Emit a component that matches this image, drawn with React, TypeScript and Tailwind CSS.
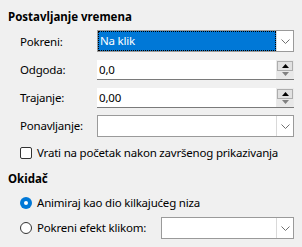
import React from "react";

function Chevron() {
  return (
    <svg width="9" height="5" viewBox="0 0 9 5" className="text-[#707070]">
      <path d="M0.5 0.5 L4.5 4.5 L8.5 0.5" fill="none" stroke="currentColor" strokeWidth="1" />
    </svg>
  );
}

function Combo({ value, focused }: { value?: string; focused?: boolean }) {
  return (
    <div className="flex h-[22px] w-full border border-[#9a9a9a] bg-white">
      {focused ? (
        <div className="flex flex-1 items-center border border-dotted border-black bg-[#0078d7] pl-[1px] text-white">
          {value}
        </div>
      ) : (
        <div className="flex flex-1 items-center pl-[2px]">{value}</div>
      )}
      <div className="flex w-[17px] items-center justify-center border-l border-[#d9d9d9] bg-white">
        <Chevron />
      </div>
    </div>
  );
}

function Spin({ value }: { value: string }) {
  return (
    <div className="flex h-[20px] w-full border-b border-[#7a7a7a] bg-white">
      <div className="flex flex-1 items-center pl-[2px]">{value}</div>
      <div className="flex w-[18px] flex-col bg-[#eaeaea] p-px">
        <div className="flex flex-1 items-center justify-center border border-[#adadad] bg-[#e1e1e1]">
          <svg width="7" height="4" viewBox="0 0 7 4">
            <path d="M0 4 L3.5 0 L7 4 Z" fill="#000" />
          </svg>
        </div>
        <div className="flex flex-1 items-center justify-center bg-[#e8e8e8]">
          <svg width="7" height="4" viewBox="0 0 7 4">
            <path d="M0 0 L3.5 4 L7 0 Z" fill="#808080" />
          </svg>
        </div>
      </div>
    </div>
  );
}

function Row({ label, children, className }: { label: string; children: React.ReactNode; className?: string }) {
  return (
    <div className={`flex items-center pl-[20px] pr-[8px] ${className ?? ""}`}>
      <div className="w-[77px] shrink-0">{label}</div>
      <div className="flex-1">{children}</div>
    </div>
  );
}

export default function App() {
  return (
    <div className="h-[247px] w-[302px] overflow-hidden bg-[#f0f0f0] pt-[9px] font-['Noto_Sans',sans-serif] text-[11.5px] leading-[16px] tracking-[-0.2px] text-black">
      <div className="pl-[8px] font-bold tracking-normal">Postavljanje vremena</div>

      <Row label="Pokreni:" className="mt-[5px]">
        <div className="h-[23px]">
          <Combo value="Na klik" focused />
        </div>
      </Row>
      <Row label="Odgoda:" className="mt-[7px]">
        <Spin value="0,0" />
      </Row>
      <Row label="Trajanje:" className="mt-[8px]">
        <Spin value="0,00" />
      </Row>
      <Row label="Ponavljanje:" className="mt-[7px]">
        <Combo />
      </Row>

      <div className="mt-[6px] flex h-[20px] items-center gap-[5px] pl-[20px]">
        <div className="h-[12px] w-[12px] rounded-[2px] border border-[#333] bg-white" />
        <span>Vrati na početak nakon završenog prikazivanja</span>
      </div>

      <div className="mt-[8px] pl-[8px] font-bold tracking-normal">Okidač</div>

      <div className="mt-[6px] flex h-[20px] items-center gap-[5px] pl-[20px]">
        <div className="flex h-[12px] w-[12px] items-center justify-center rounded-full bg-[#0078d7]">
          <div className="h-[4px] w-[4px] rounded-full bg-white" />
        </div>
        <span>Animiraj kao dio kilkajućeg niza</span>
      </div>

      <div className="mt-[4px] flex items-center pl-[20px] pr-[8px]">
        <div className="flex w-[141px] items-center gap-[5px]">
          <div className="h-[12px] w-[12px] rounded-full border border-[#333] bg-white" />
          <span>Pokreni efekt klikom:</span>
        </div>
        <div className="flex-1">
          <Combo />
        </div>
      </div>
    </div>
  );
}
